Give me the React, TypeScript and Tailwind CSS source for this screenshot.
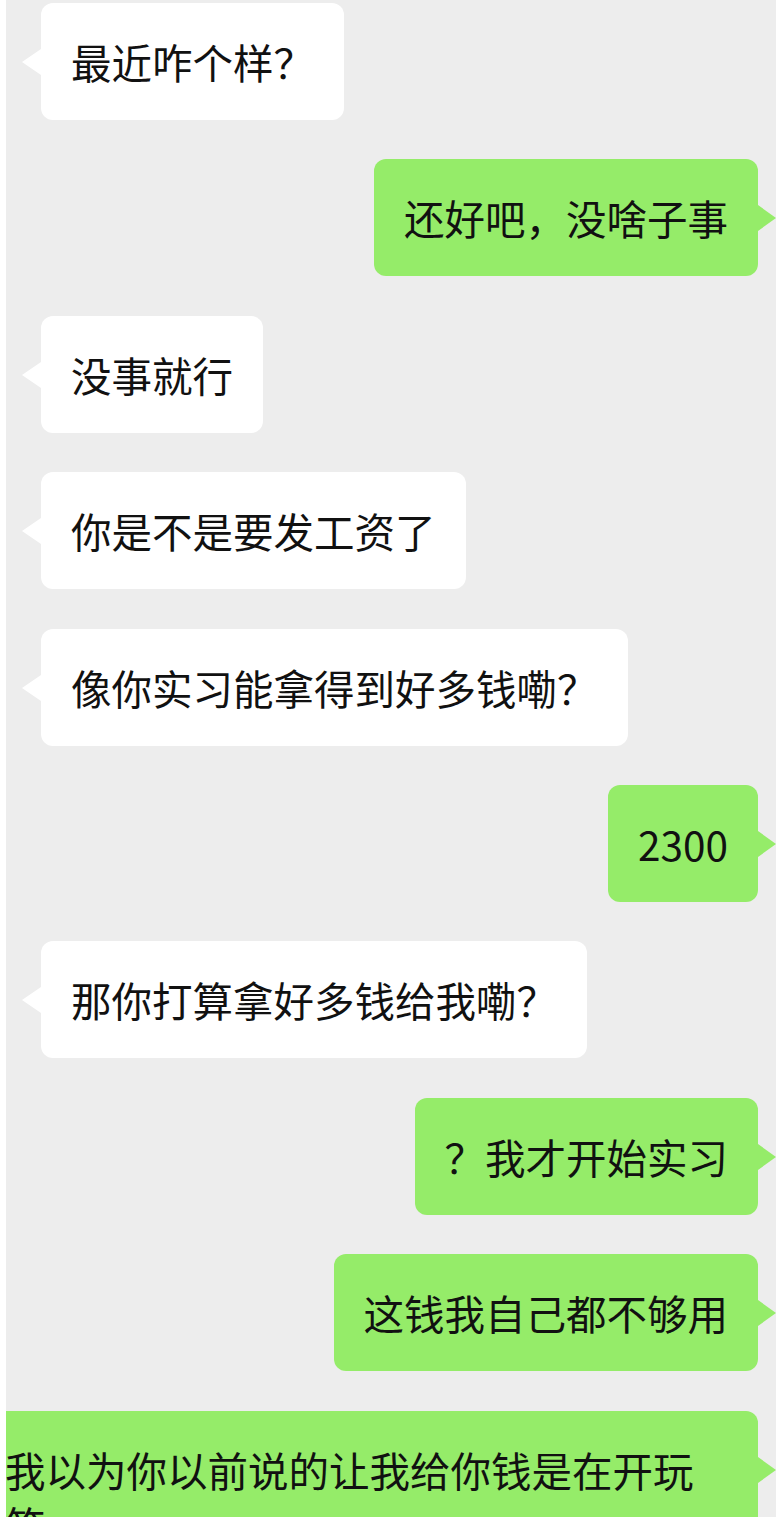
import React from "react";

type Msg = { from: "them" | "me"; text: string };

const messages: Msg[] = [
  { from: "them", text: "最近咋个样？" },
  { from: "me", text: "还好吧，没啥子事" },
  { from: "them", text: "没事就行" },
  { from: "them", text: "你是不是要发工资了" },
  { from: "them", text: "像你实习能拿得到好多钱嘞？" },
  { from: "me", text: "2300" },
  { from: "them", text: "那你打算拿好多钱给我嘞？" },
  { from: "me", text: "？我才开始实习" },
  { from: "me", text: "这钱我自己都不够用" },
];

const bubbleText =
  "px-[30px] py-[31px] text-[40.5px] leading-[55px] text-[#111111] whitespace-nowrap";

const Bubble: React.FC<{ msg: Msg }> = ({ msg }) => {
  if (msg.from === "them") {
    return (
      <div className="flex justify-start pl-[35px]">
        <div className={`relative rounded-[12px] bg-white ${bubbleText}`}>
          <span className="absolute left-[-19px] top-[46px] h-0 w-0 border-y-[13px] border-r-[19px] border-y-transparent border-r-white" />
          {msg.text}
        </div>
      </div>
    );
  }
  return (
    <div className="flex justify-end pr-[18px]">
      <div className={`relative rounded-[12px] bg-[#95ec69] ${bubbleText}`}>
        <span className="absolute right-[-18px] top-[46px] h-0 w-0 border-y-[13px] border-l-[18px] border-y-transparent border-l-[#95ec69]" />
        {msg.text}
      </div>
    </div>
  );
};

export default function App() {
  return (
    <div
      className="h-[1517px] w-[776px] overflow-hidden bg-white pl-[6px]"
      style={{ fontFamily: '"Noto Sans CJK SC", "Noto Sans", sans-serif' }}
    >
      <div className="flex h-full flex-col gap-[39.4px] overflow-hidden bg-[#ededed] pt-[3px]">
        {messages.map((m, i) => (
          <Bubble key={i} msg={m} />
        ))}

        {/* last message, runs off the left edge and the bottom */}
        <div className="relative ml-[-31px] mr-[18px] shrink-0 rounded-[12px] bg-[#95ec69] px-[30px] py-[31px] text-[40.5px] leading-[55px] text-[#111111]">
          <span className="absolute right-[-18px] top-[46px] h-0 w-0 border-y-[13px] border-l-[18px] border-y-transparent border-l-[#95ec69]" />
          我以为你以前说的让我给你钱是在开玩笑
        </div>
      </div>
    </div>
  );
}
